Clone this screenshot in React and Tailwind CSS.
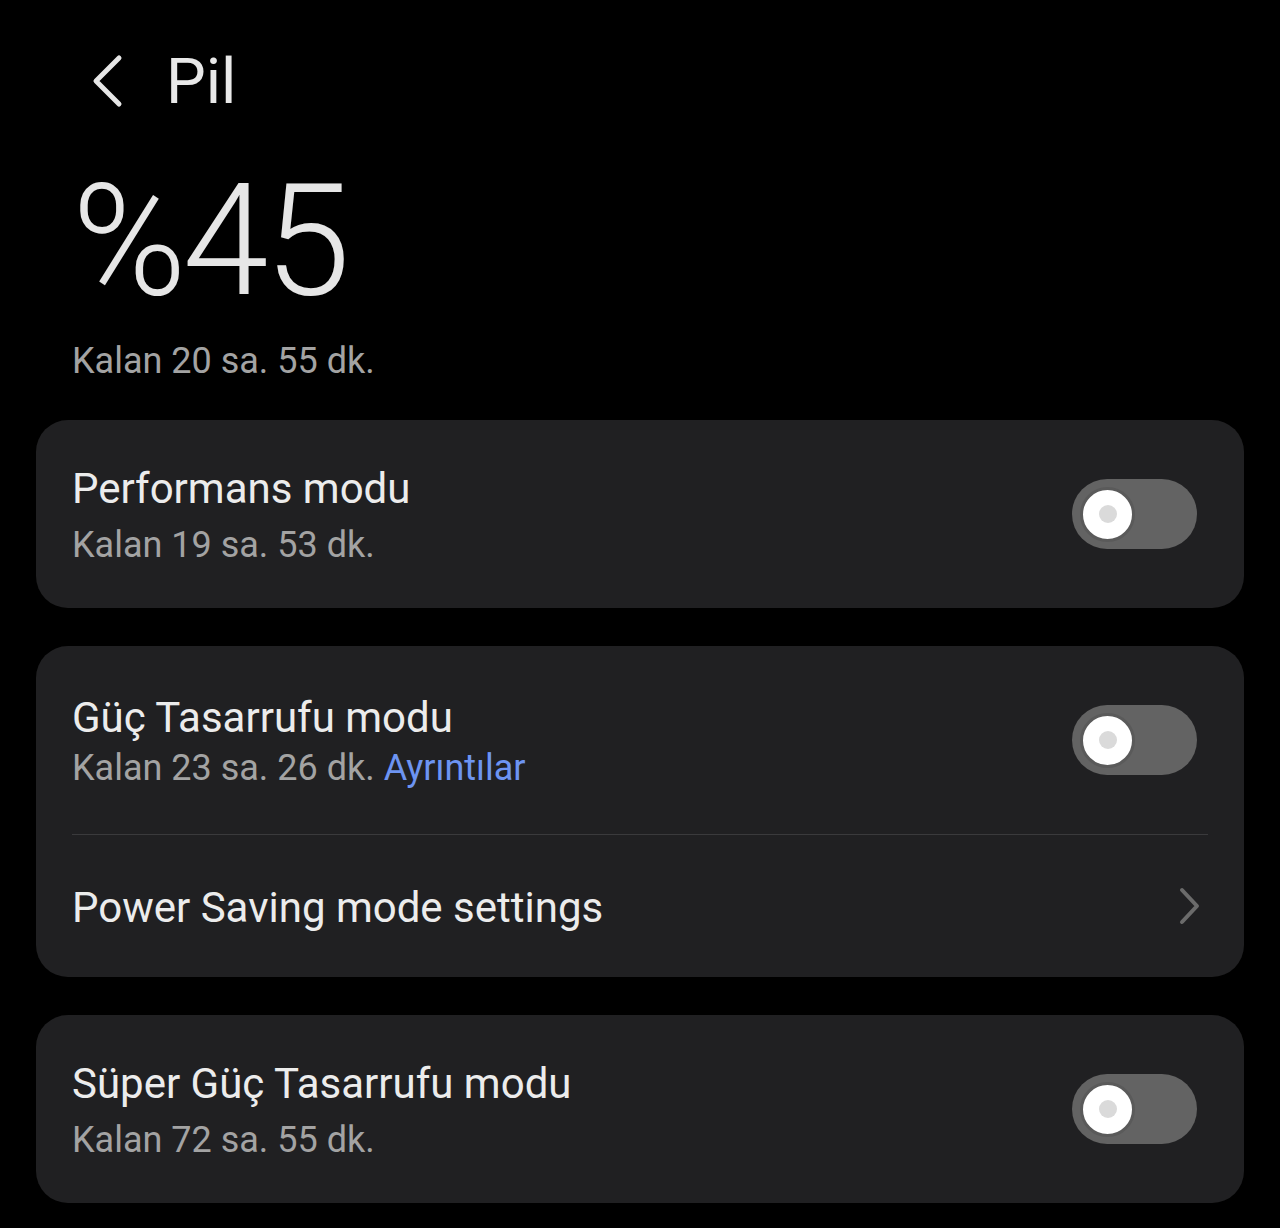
import React from 'react';

const font = { fontFamily: 'Roboto, "Noto Sans", sans-serif' };

const Toggle = () => (
  <div className="w-[125px] h-[70px] rounded-full bg-[#636363] flex items-center pl-[8px] shrink-0">
    <div className="w-[55px] h-[55px] rounded-full bg-white border-[3px] border-[#5a5a5a] flex items-center justify-center">
      <div className="w-[18px] h-[18px] rounded-full bg-[#dadada]" />
    </div>
  </div>
);

const ToggleRow = ({ title, sub }) => (
  <div className="h-[188px] flex items-center justify-between pl-9 pr-[47px]">
    <div className="flex flex-col pt-[6px]">
      <span className="text-[42px] leading-[56px] text-[#ececec]">{title}</span>
      <span className="text-[36px] leading-[56px] text-[#a3a3a3]">{sub}</span>
    </div>
    <Toggle />
  </div>
);

export default function App() {
  return (
    <div className="w-[1280px] h-[1228px] bg-black overflow-hidden" style={font}>
      <div className="h-[160px] flex items-center pl-[90px] pt-[2px]">
        <svg width="34" height="54" viewBox="0 0 34 54" fill="none">
          <path d="M29 4 L6 27 L29 50" stroke="#e6e6e6" strokeWidth="5" strokeLinecap="round" strokeLinejoin="round" />
        </svg>
        <span className="ml-[42px] text-[63px] leading-none text-[#e8e8e8]">Pil</span>
      </div>
      <div className="pl-[72px]">
        <div className="text-[155px] leading-[150px] font-light text-[#e6e6e6] tracking-[-4px] mt-[6px]">%45</div>
        <div className="text-[36px] leading-[50px] text-[#a3a3a3] mt-[20px]">Kalan 20 sa. 55 dk.</div>
      </div>
      <div className="px-9 flex flex-col gap-[38px] mt-[34px]">
        <div className="bg-[#202022] rounded-[32px]">
          <ToggleRow title="Performans modu" sub="Kalan 19 sa. 53 dk." />
        </div>
        <div className="bg-[#202022] rounded-[32px]">
          <div className="h-[188px] flex items-center justify-between pl-9 pr-[47px]">
            <div className="flex flex-col pt-[6px]">
              <span className="text-[42px] leading-[50px] text-[#ececec]">Güç Tasarrufu modu</span>
              <span className="text-[36px] leading-[50px] text-[#a3a3a3]">
                Kalan 23 sa. 26 dk. <span className="text-[#6d94f2]">Ayrıntılar</span>
              </span>
            </div>
            <Toggle />
          </div>
          <div className="mx-9 h-px bg-[#3a3a3c]" />
          <div className="h-[142px] flex items-center justify-between pl-9 pr-[42px]">
            <span className="text-[42px] leading-[50px] text-[#ececec] pt-[4px]">Power Saving mode settings</span>
            <svg width="24" height="40" viewBox="0 0 24 40" fill="none">
              <path d="M4 4 L19 20 L4 36" stroke="#6b6b6b" strokeWidth="4" strokeLinecap="round" strokeLinejoin="round" />
            </svg>
          </div>
        </div>
        <div className="bg-[#202022] rounded-[32px]">
          <ToggleRow title="Süper Güç Tasarrufu modu" sub="Kalan 72 sa. 55 dk." />
        </div>
      </div>
    </div>
  );
}
